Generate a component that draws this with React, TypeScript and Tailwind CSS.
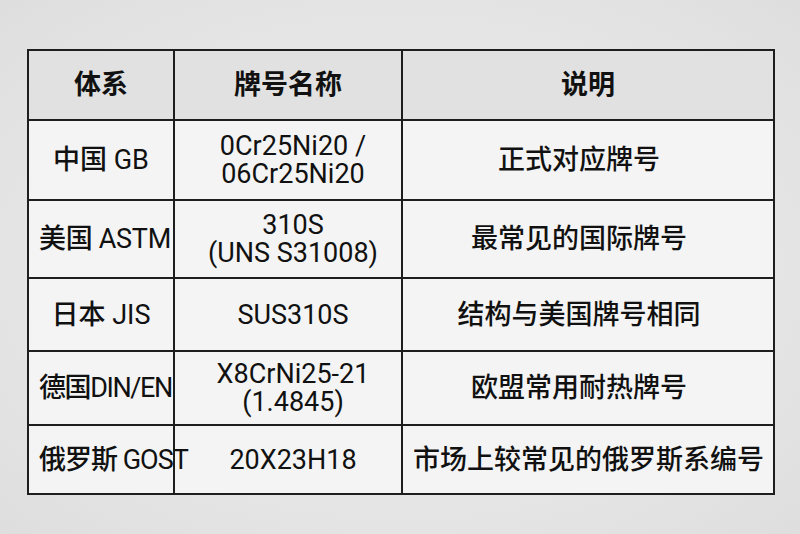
const rows = [
  { cn: '中国', en: ' GB', fit: '', grade: ['0Cr25Ni20 /', '06Cr25Ni20'], note: '正式对应牌号', h: 'h-[80px]' },
  { cn: '美国', en: ' ASTM', fit: 'tracking-[-0.3px]', grade: ['310S', '(UNS S31008)'], note: '最常见的国际牌号', h: 'h-[78px]' },
  { cn: '日本', en: ' JIS', fit: '', grade: ['SUS310S'], note: '结构与美国牌号相同', h: 'h-[73px]' },
  { cn: '德国', en: 'DIN/EN', fit: 'tracking-[-1.4px]', grade: ['X8CrNi25-21', '(1.4845)'], note: '欧盟常用耐热牌号', h: 'h-[74px]' },
  { cn: '俄罗斯', en: ' GOST', fit: 'tracking-[-1px]', grade: ['20X23H18'], note: '市场上较常见的俄罗斯系编号', h: 'h-[69px]' },
];

const cell = 'border-2 border-[#1e1e1e] text-center align-middle whitespace-nowrap';

export default function App() {
  return (
    <div
      className="w-[800px] h-[534px] bg-[radial-gradient(ellipse_at_center,#ececec_0%,#e4e4e4_70%,#dedede_100%)] pt-[49px] pl-[27px] text-[#111] text-[27px] leading-[28px]"
      style={{ fontFamily: 'Roboto, "Noto Sans CJK SC", sans-serif' }}
    >
      <table className="w-[746px] table-fixed border-collapse">
        <colgroup>
          <col className="w-[146px]" />
          <col className="w-[228px]" />
          <col className="w-[372px]" />
        </colgroup>
        <thead>
          <tr className="h-[70px] bg-[#e1e1e1]">
            <th className={`${cell} px-[10px] font-semibold`}>体系</th>
            <th className={`${cell} px-[10px] font-semibold`}>牌号名称</th>
            <th className={`${cell} px-[10px] font-semibold`}>说明</th>
          </tr>
        </thead>
        <tbody>
          {rows.map((r) => (
            <tr key={r.cn} className={`${r.h} bg-[#f4f4f4]`}>
              <td className={`${cell} ${r.fit} px-[10px] overflow-visible`}>
                <span className="font-medium">{r.cn}</span>
                <span className="whitespace-pre">{r.en}</span>
              </td>
              <td className={`${cell} pl-[20px] pr-[10px]`}>
                {r.grade.map((g) => (
                  <div key={g}>{g}</div>
                ))}
              </td>
              <td className={`${cell} pl-[10px] pr-[28px] font-medium`}>{r.note}</td>
            </tr>
          ))}
        </tbody>
      </table>
    </div>
  );
}
